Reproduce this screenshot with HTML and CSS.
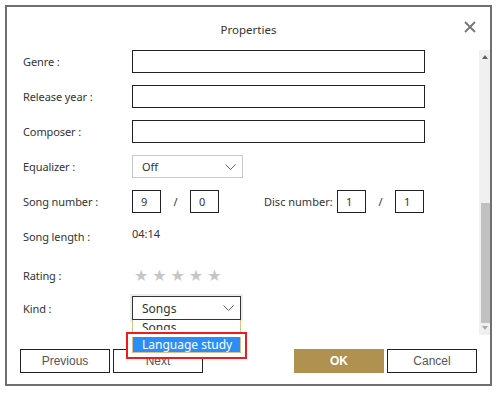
FILE: index.html
```html
<!DOCTYPE html>
<html lang="en">
  <head>
    <meta charset="UTF-8" />
    <title>Properties</title>
    <link rel="stylesheet" href="styles.css">
  </head>
  <body>
    <div class="dialog">
      <div class="dialog__header">
        <span class="dialog__title">Properties</span>
        <svg class="dialog__close" width="12" height="12" viewBox="0 0 12 12">
          <path d="M1 1 L11 11 M11 1 L1 11" stroke="#757575" stroke-width="1.8" fill="none" />
        </svg>
      </div>

      <div class="dialog__body">
        <div class="form">
          <div class="row">
            <label>Genre :</label>
            <div class="field"></div>
          </div>
          <div class="row">
            <label>Release year :</label>
            <div class="field"></div>
          </div>
          <div class="row">
            <label>Composer :</label>
            <div class="field"></div>
          </div>
          <div class="row">
            <label>Equalizer :</label>
            <div class="select select--light">
              <span>Off</span>
              <svg width="11" height="6" viewBox="0 0 11 6"><path d="M0.5 0.5 L5.5 5.5 L10.5 0.5" stroke="#666" fill="none" /></svg>
            </div>
          </div>
          <div class="row">
            <label>Song number :</label>
            <div class="numbers">
              <div class="num">9</div>
              <span class="slash">/</span>
              <div class="num">0</div>
              <span class="disc-label">Disc number:</span>
              <div class="num">1</div>
              <span class="slash">/</span>
              <div class="num">1</div>
            </div>
          </div>
          <div class="row">
            <label>Song length :</label>
            <span class="value">04:14</span>
          </div>
          <div class="row row--rating">
            <label>Rating :</label>
            <div class="stars">
              <span>★</span><span>★</span><span>★</span><span>★</span><span>★</span>
            </div>
          </div>
          <div class="row row--kind">
            <label>Kind :</label>
            <div class="kind">
              <div class="select select--dark">
                <span>Songs</span>
                <svg width="11" height="6" viewBox="0 0 11 6"><path d="M0.5 0.5 L5.5 5.5 L10.5 0.5" stroke="#666" fill="none" /></svg>
              </div>
              <!-- drop-down list, first item scrolled half out of view -->
              <div class="kind__list">
                <div class="kind__clip">
                  <div class="kind__item">Songs</div>
                </div>
              </div>
              <!-- highlighted item, marked with a red frame -->
              <div class="kind__mark">
                <div class="kind__box">
                  <div class="kind__item kind__item--active">Language study</div>
                </div>
              </div>
            </div>
          </div>
        </div>

        <div class="scrollbar">
          <svg class="scrollbar__up" width="6" height="4" viewBox="0 0 6 4"><path d="M0 4 L3 0 L6 4 Z" fill="#606060" /></svg>
          <div class="scrollbar__track">
            <div class="scrollbar__thumb"></div>
          </div>
          <svg class="scrollbar__down" width="6" height="4" viewBox="0 0 6 4"><path d="M0 0 L3 4 L6 0 Z" fill="#a8a8a8" /></svg>
        </div>
      </div>

      <div class="dialog__footer">
        <div class="buttons">
          <button class="btn">Previous</button>
          <button class="btn">Next</button>
        </div>
        <div class="buttons">
          <button class="btn btn--ok">OK</button>
          <button class="btn">Cancel</button>
        </div>
      </div>
    </div>
  </body>
</html>
```

FILE: styles.css
```css
body {
  margin: 0;
  padding: 5px;
  font-family: "Noto Sans", "Open Sans", sans-serif;
  font-size: 11px;
  color: #333;
  background: #fff;
}

.dialog {
  width: 483px;
  height: 377px;
  border: 2px solid #6f6f6f;
  display: flex;
  flex-direction: column;
}

.dialog__header {
  height: 43px;
  position: relative;
  display: flex;
  align-items: center;
  justify-content: center;
}

.dialog__title {
  font-size: 11.5px;
  color: #333;
  margin-top: 1px;
}

.dialog__close {
  position: absolute;
  right: 14px;
  top: 14px;
}

.dialog__body {
  height: 285px;
  display: flex;
}

.form {
  flex: 1;
  padding-left: 16px;
}

.row {
  display: grid;
  grid-template-columns: 109px 1fr;
  align-items: center;
  height: 23px;
  margin-bottom: 12px;
}

.row label {
  color: #333;
  letter-spacing: -0.1px;
}

.field {
  width: 291px;
  height: 21px;
  border: 1px solid #222;
}

.select {
  display: flex;
  align-items: center;
  justify-content: space-between;
  padding: 0 6px 0 9px;
  box-sizing: border-box;
}

.select--light {
  width: 111px;
  height: 23px;
  border: 1px solid #c8c8c8;
}

.select--dark {
  width: 109px;
  height: 24px;
  border: 1px solid #333;
  font-size: 12px;
  outline: 2px solid #ececec;
}

.numbers {
  display: flex;
  align-items: center;
}

.num {
  width: 19px;
  height: 21px;
  border: 1px solid #222;
  display: flex;
  align-items: center;
  padding-left: 8px;
}

.slash {
  width: 29px;
  text-align: center;
}

.disc-label {
  margin-left: 45px;
  width: 73px;
}

.value {
  align-self: start;
  margin-top: 1px;
}

.row--rating {
  margin-top: 16px;
  margin-bottom: 9px;
}

.stars {
  display: flex;
  color: #c6c6c6;
  font-size: 16px;
  font-family: "DejaVu Sans", sans-serif;
}

.stars span {
  width: 18.3px;
  text-align: center;
}

.row--kind {
  height: 24px;
}

.kind {
  position: relative;
}

.kind__list {
  position: absolute;
  left: 0;
  top: 24px;
  width: 107px;
  height: 14px;
  border: 1px solid #dcc08a;
  border-top: none;
  border-bottom: none;
  background: #fff;
  z-index: 2;
}

.kind__clip {
  height: 10px;
  overflow: hidden;
}

.kind__item {
  padding-left: 9px;
  font-size: 12px;
  line-height: 14px;
  color: #333;
}

.kind__clip .kind__item {
  padding-top: 1px;
}

.kind__mark {
  position: absolute;
  left: -6px;
  top: 36px;
  width: 109px;
  padding: 3px 4px 4px 4px;
  border: 2px solid #ee1c1c;
  background: #fff;
  z-index: 3;
}

.kind__box {
  border: 1px solid #dcc08a;
  border-top: none;
}

.kind__item--active {
  background: #2b8ef8;
  color: #fff;
  height: 15px;
  line-height: 15px;
}

.scrollbar {
  width: 11px;
  background: #f0f0f0;
  display: flex;
  flex-direction: column;
  align-items: center;
}

.scrollbar__up {
  margin-top: 5px;
}

.scrollbar__track {
  flex: 1;
  width: 100%;
  padding-top: 144px;
  padding-bottom: 3px;
  box-sizing: border-box;
}

.scrollbar__thumb {
  height: 100%;
  margin-left: 2px;
  background: #c1c1c1;
}

.scrollbar__down {
  margin-bottom: 5px;
}

.dialog__footer {
  flex: 1;
  display: flex;
  justify-content: space-between;
  padding: 14px 13px 0 13px;
}

.buttons {
  display: flex;
  gap: 3px;
}

.btn {
  width: 90px;
  height: 24px;
  border: 1px solid #222;
  background: #fff;
  font-family: "Liberation Sans", Arial, sans-serif;
  font-size: 12px;
  color: #555;
  padding: 0;
}

.btn--ok {
  background: #b0914f;
  border-color: #b0914f;
  color: #fff;
  font-weight: bold;
}
```
